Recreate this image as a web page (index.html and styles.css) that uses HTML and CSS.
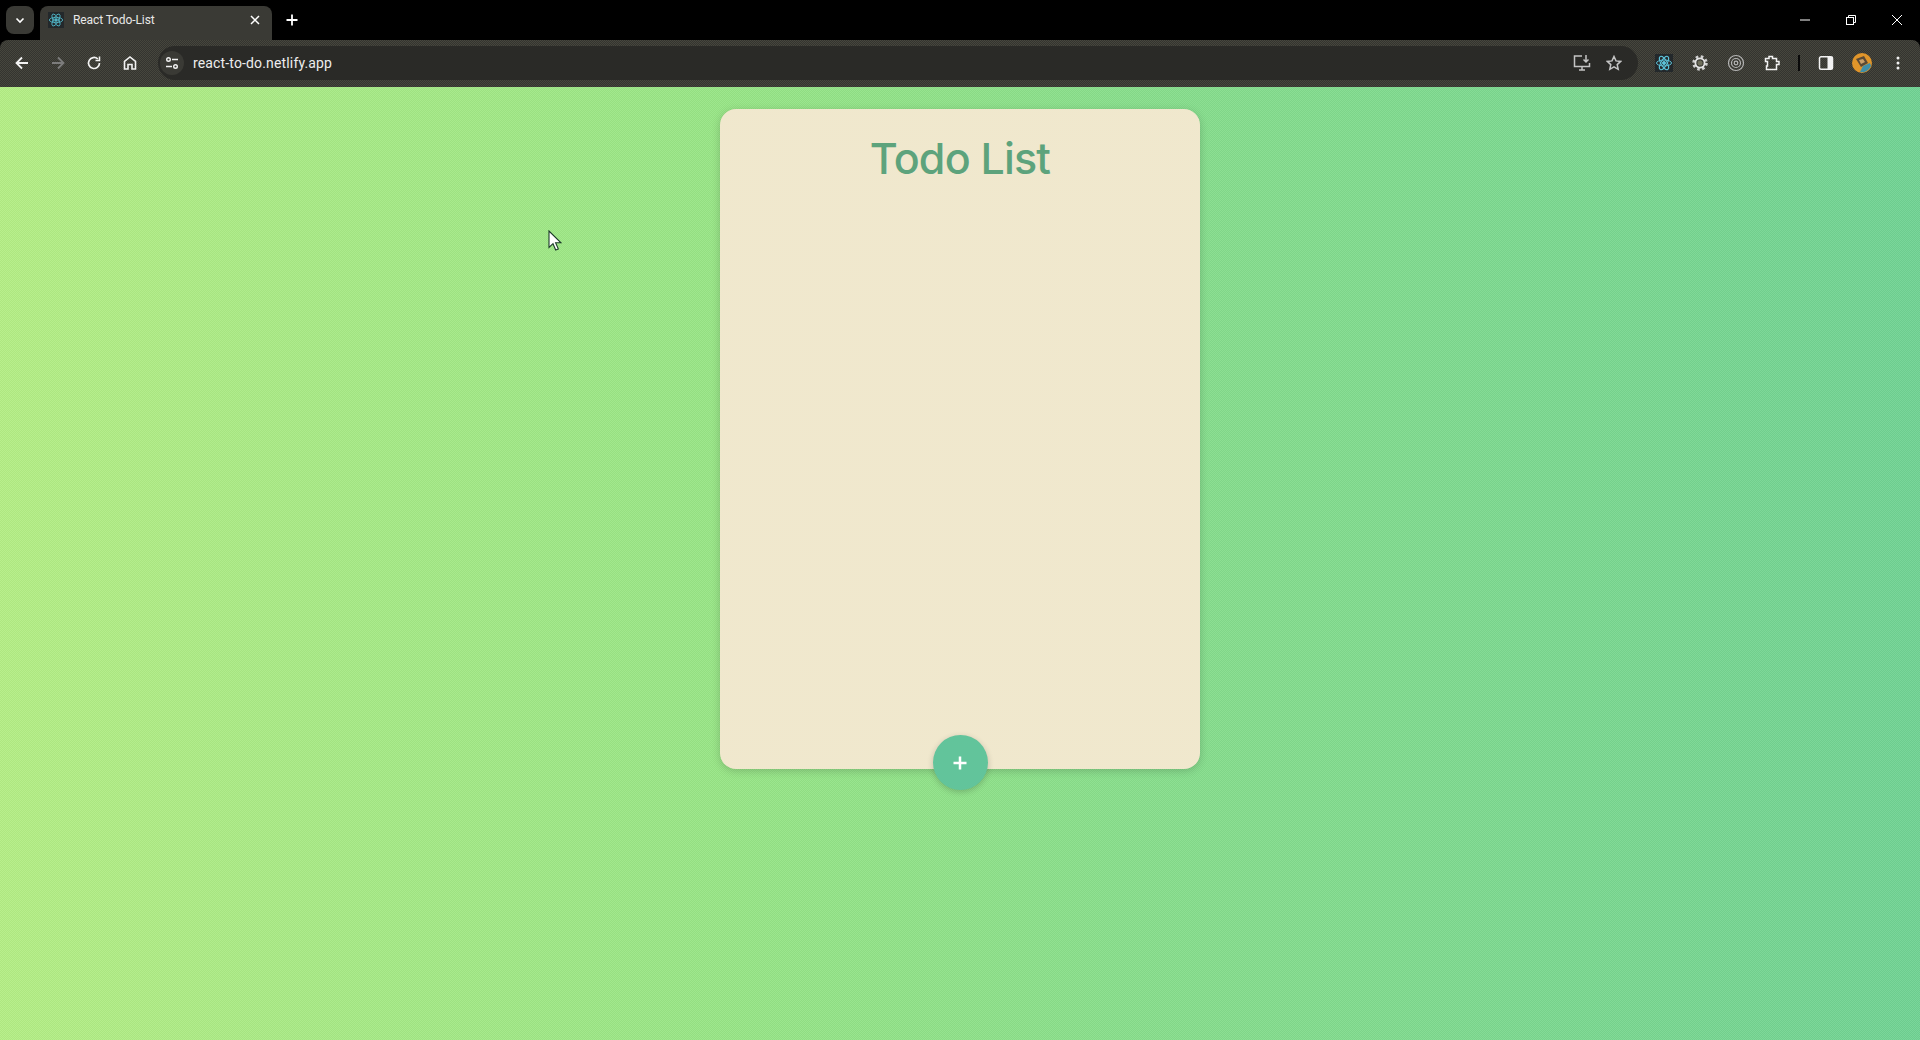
FILE: index.html
```html
<!DOCTYPE html>
<html lang="en">
<head>
    <meta charset="UTF-8">
    <meta name="viewport" content="width=device-width, initial-scale=1.0">
    <title>React Todo-List</title>
    <link rel="stylesheet" href="styles.css">
</head>
<body>
    <div class="tabStrip">
        <div class="tabSearch">
            <svg width="12" height="12" viewBox="0 0 12 12"><path d="M2.500 4.500 6 8l3.500-3.500" fill="none" stroke="#fff" stroke-width="1.600"/></svg>
        </div>
        <div class="tab">
            <svg class="tabIcon" width="18" height="18" viewBox="0 0 18 18" fill="none" stroke="#4fb3c4" stroke-width="1">
                <rect width="18" height="18" fill="#23282b" stroke="none"/>
                <ellipse cx="9" cy="9" rx="7.500" ry="3"/>
                <ellipse cx="9" cy="9" rx="7.500" ry="3" transform="rotate(60 9 9)"/>
                <ellipse cx="9" cy="9" rx="7.500" ry="3" transform="rotate(120 9 9)"/>
                <circle cx="9" cy="9" r="1.500" fill="#4fb3c4"/>
            </svg>
            <span class="tabTitle">React Todo-List</span>
            <svg class="tabClose" width="10" height="10" viewBox="0 0 10 10"><path d="M1 1l8 8M9 1 1 9" stroke="#fff" stroke-width="1.500"/></svg>
        </div>
        <svg class="newTab" width="14" height="14" viewBox="0 0 14 14"><path d="M7 1.500v11M1.500 7h11" stroke="#fff" stroke-width="1.800"/></svg>
        <div class="windowControls">
            <div class="winBtn"><svg width="12" height="12" viewBox="0 0 12 12"><path d="M1 6h10" stroke="#fff"/></svg></div>
            <div class="winBtn"><svg width="12" height="12" viewBox="0 0 12 12" fill="none" stroke="#fff"><rect x="1.500" y="3.500" width="7" height="7"/><path d="M3.500 3.500v-2h7v7h-2"/></svg></div>
            <div class="winBtn"><svg width="12" height="12" viewBox="0 0 12 12"><path d="M1 1l10 10M11 1 1 11" stroke="#fff"/></svg></div>
        </div>
    </div>

    <div class="toolbar">
        <div class="navBtn"><svg width="16" height="16" viewBox="0 0 16 16" fill="none" stroke="#f2f2f2" stroke-width="1.800"><path d="M14 8H3M8 2.500 2.500 8 8 13.500"/></svg></div>
        <div class="navBtn"><svg width="16" height="16" viewBox="0 0 16 16" fill="none" stroke="#7c7c7c" stroke-width="1.800"><path d="M2 8h11M8 2.500 13.500 8 8 13.500"/></svg></div>
        <div class="navBtn"><svg width="16" height="16" viewBox="0 0 16 16" fill="none" stroke="#f2f2f2" stroke-width="1.700"><path d="M13.500 8A5.500 5.500 0 1 1 11.800 4"/><path d="M13.500 1.500V5.500H9.500" stroke-width="1.500"/></svg></div>
        <div class="navBtn"><svg width="16" height="16" viewBox="0 0 16 16" fill="none" stroke="#f2f2f2" stroke-width="1.600"><path d="M2.500 14V6.500L8 2l5.500 4.500V14H10V9.500H6V14z"/></svg></div>

        <div class="addressBar">
            <div class="siteInfo">
                <svg width="14" height="14" viewBox="0 0 14 14" fill="none" stroke="#f2f2f2" stroke-width="1.400"><circle cx="3.500" cy="3.500" r="1.800"/><path d="M7 3.500h6M1 10.500h6"/><circle cx="10.500" cy="10.500" r="1.800"/></svg>
            </div>
            <span class="url">react-to-do.netlify.app</span>
            <div class="addressIcons">
                <svg width="18" height="18" viewBox="0 0 18 18" fill="none" stroke="#c4c4c4" stroke-width="1.500"><path d="M9 2H1.500v10.500h15V9M6 16h6M9 12.500V16"/><path d="M13 1v6.500M10.500 5.500 13 8l2.500-2.500"/></svg>
                <svg width="16" height="16" viewBox="0 0 16 16" fill="none" stroke="#c4c4c4" stroke-width="1.500"><path d="M8 1.500l2 4.400 4.700.5-3.500 3.200 1 4.700L8 11.900l-4.200 2.400 1-4.700L1.300 6.400 6 5.900z"/></svg>
            </div>
        </div>

        <div class="extensions">
            <div class="navBtn"><svg width="18" height="18" viewBox="0 0 18 18" fill="none" stroke="#5cc2d8" stroke-width="1">
                <rect width="18" height="18" fill="#23282b" stroke="none"/>
                <ellipse cx="9" cy="9" rx="7.500" ry="3"/>
                <ellipse cx="9" cy="9" rx="7.500" ry="3" transform="rotate(60 9 9)"/>
                <ellipse cx="9" cy="9" rx="7.500" ry="3" transform="rotate(120 9 9)"/>
                <circle cx="9" cy="9" r="1.500" fill="#5cc2d8"/>
            </svg></div>
            <div class="navBtn"><svg width="16" height="16" viewBox="0 0 16 16"><circle cx="8" cy="8" r="6" fill="none" stroke="#d0d0d0" stroke-width="3.500" stroke-dasharray="2.400 2.310"/><circle cx="8" cy="8" r="4.600" fill="none" stroke="#e4e4e4" stroke-width="1.800"/><circle cx="8" cy="8" r="2.500" fill="#6f6f5c"/></svg></div>
            <div class="navBtn"><svg width="18" height="18" viewBox="0 0 18 18" fill="none" stroke="#b5b5b5" stroke-width="1.200"><circle cx="9" cy="9" r="7.500"/><circle cx="9" cy="9" r="4.500"/><circle cx="9" cy="9" r="1.800"/></svg></div>
            <div class="navBtn"><svg width="16" height="16" viewBox="0 0 16 16" fill="none" stroke="#f2f2f2" stroke-width="1.500"><path d="M1.500 3.500H5V1.500h3.500v2H12.500V6.500H15V9.500H12.500V14.500H2.500V11H3.500V6.500H1.500z"/></svg></div>
            <div class="divider"></div>
            <div class="navBtn"><svg width="16" height="16" viewBox="0 0 16 16"><rect x="1.500" y="1.750" width="13" height="12.500" rx="1.500" fill="none" stroke="#f2f2f2" stroke-width="1.500"/><rect x="9.500" y="2" width="5" height="12" fill="#f2f2f2"/></svg></div>
            <div class="navBtn">
                <svg width="20" height="20" viewBox="0 0 20 20">
                    <circle cx="10" cy="10" r="10" fill="#e0952a"/>
                    <path d="M4 6l8-3 4 7-7 4z" fill="#5b4a35"/>
                    <path d="M7 7l4-1 2 3-4 2z" fill="#c9a06a"/>
                    <path d="M8 19l3-6 7-3 1 3a10 10 0 0 1-11 6z" fill="#3f8fa8"/>
                </svg>
            </div>
            <div class="navBtn"><svg width="16" height="16" viewBox="0 0 16 16" fill="#f2f2f2"><circle cx="8" cy="3" r="1.500"/><circle cx="8" cy="8" r="1.500"/><circle cx="8" cy="13" r="1.500"/></svg></div>
        </div>
    </div>

    <main class="page">
        <div class="todoCard">
            <h1 class="todoTitle">Todo List</h1>
            <button class="addBtn">
                <svg width="14" height="14" viewBox="0 0 14 14"><path d="M7 0.500v13M0.500 7h13" stroke="#fff" stroke-width="2.500"/></svg>
            </button>
        </div>
        <svg class="cursor" width="14" height="22" viewBox="0 0 14 22"><path d="M1 1v16.500l4-3.800 2.700 6.300 2.600-1.100-2.700-6.100h5.400z" fill="#fff" stroke="#1c3a2a" stroke-width="1.100"/></svg>
    </main>
</body>
</html>
```

FILE: styles.css
```css
* {
    box-sizing: border-box;
}

html, body {
    height: 100%;
}

body {
    margin: 0;
    display: flex;
    flex-direction: column;
    overflow: hidden;
    background: #000;
    font-family: Roboto, "Liberation Sans", sans-serif;
}

/* tab row */
.tabStrip {
    height: 40px;
    display: flex;
    align-items: flex-start;
    background: #000;
    padding: 6px 0 0 6px;
    flex-shrink: 0;
}

.tabSearch {
    width: 28px;
    height: 28px;
    border-radius: 8px;
    background: #3a3a35;
    display: flex;
    align-items: center;
    justify-content: center;
}

.tab {
    width: 232px;
    height: 34px;
    margin-left: 6px;
    padding: 0 8px 6px 8px;
    border-radius: 8px 8px 0 0;
    background: #3a3a35;
    display: flex;
    align-items: center;
    color: #e8e8e8;
    font-size: 12px;
}

.tabIcon {
    width: 16px;
    height: 16px;
    flex-shrink: 0;
}

.tabTitle {
    margin-left: 9px;
    flex: 1;
    letter-spacing: -0.1px;
}

.tabClose {
    margin-right: 4px;
}

.newTab {
    margin: 7px 0 0 13px;
}

.windowControls {
    margin-left: auto;
    margin-top: -6px;
    display: flex;
}

.winBtn {
    width: 46px;
    height: 40px;
    display: flex;
    align-items: center;
    justify-content: center;
}

/* toolbar */
.toolbar {
    height: 47px;
    flex-shrink: 0;
    display: flex;
    align-items: center;
    padding: 0 4px 1px;
    background:
        repeating-conic-gradient(rgba(0,0,0,.16) 0 25%, rgba(255,255,200,.04) 0 50%) 0 0 / 2px 2px,
        #3e3e38;
    border-radius: 8px 8px 0 0;
}

.navBtn {
    width: 36px;
    height: 36px;
    display: flex;
    align-items: center;
    justify-content: center;
    flex-shrink: 0;
}

.addressBar {
    flex: 1;
    height: 34px;
    margin-left: 10px;
    padding: 0 16px 0 2px;
    border-radius: 17px;
    background: #2a2a27;
    display: flex;
    align-items: center;
}

.siteInfo {
    width: 24px;
    height: 24px;
    border-radius: 50%;
    background: #3a3a35;
    display: flex;
    align-items: center;
    justify-content: center;
}

.url {
    margin-left: 9px;
    color: #ededed;
    font-size: 14px;
    letter-spacing: 0.15px;
}

.addressIcons {
    margin-left: auto;
    display: flex;
    align-items: center;
    gap: 15px;
}

.extensions {
    margin-left: 8px;
    display: flex;
    align-items: center;
}

.divider {
    width: 2px;
    height: 16px;
    background: #0a0a0a;
    margin: 0 8px;
}

/* page */
.page {
    flex: 1;
    position: relative;
    padding-top: 22px;
    display: flex;
    flex-direction: column;
    align-items: center;
    background:
        repeating-conic-gradient(rgba(255,255,255,.07) 0 25%, rgba(0,0,0,.03) 0 50%) 0 0 / 2px 2px,
        linear-gradient(90deg, #b4ee84 0%, #97e585 38%, #86de8b 60%, #70d393 100%);
}

.todoCard {
    width: 480px;
    height: 660px;
    position: relative;
    border-radius: 16px;
    background:
        repeating-conic-gradient(rgba(255,210,170,.1) 0 25%, rgba(220,240,210,.1) 0 50%) 0 0 / 2px 2px,
        #f0e9cf;
    box-shadow: 0 2px 8px rgba(0,0,0,.18);
}

.todoTitle {
    margin: 20px 0 0;
    text-align: center;
    color: #5da37c;
    font-family: Inter, sans-serif;
    font-size: 43px;
    font-weight: 500;
    line-height: 58px;
    letter-spacing: -0.8px;
}

.addBtn {
    position: absolute;
    left: 50%;
    bottom: -21px;
    width: 55px;
    height: 55px;
    margin-left: -27.5px;
    padding: 0;
    border: 0;
    border-radius: 50%;
    background: #62c49b;
    box-shadow: 0 2px 6px rgba(0,0,0,.2);
    display: flex;
    align-items: center;
    justify-content: center;
}

.cursor {
    position: absolute;
    left: 548px;
    top: 143px;
}
```
